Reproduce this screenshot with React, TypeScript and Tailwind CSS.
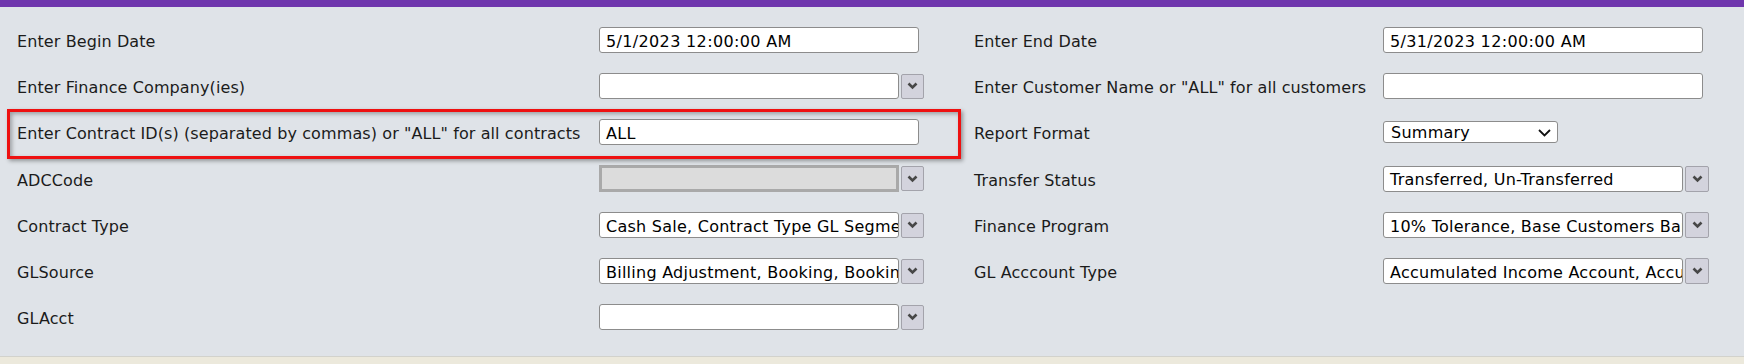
import React from 'react'

const font = { fontFamily: '"DejaVu Sans", Verdana, sans-serif' }

function TextBox({ value = '' }: { value?: string }) {
  return (
    <div className="h-[26px] w-[320px] border border-[#8c8c8c] rounded-[3px] bg-white px-[6px] pt-[3px] flex items-center text-[16px] tracking-[0.35px] text-black whitespace-nowrap overflow-hidden">
      {value}
    </div>
  )
}

function Chevron() {
  return (
    <svg width="11" height="8" viewBox="0 0 11 8">
      <polyline points="1.5,1.5 5.5,5.5 9.5,1.5" fill="none" stroke="#474747" strokeWidth="2.6" />
    </svg>
  )
}

function MultiSelect({ value = '', disabled = false, right = false }: { value?: string; disabled?: boolean; right?: boolean }) {
  return (
    <div className="flex items-center gap-[2px]">
      {disabled ? (
        <div className="h-[27px] w-[300px] border-[3px] border-[#a9a9a9] bg-[#dcdcdc]" />
      ) : (
        <div className="h-[26px] w-[300px] border border-[#8c8c8c] rounded-[3px] bg-white pl-[6px] pt-[3px] flex items-center text-[16px] tracking-[0.25px] text-black whitespace-nowrap overflow-hidden">
          {value}
        </div>
      )}
      <div
        className={
          (right ? 'w-[24px] h-[26px]' : 'w-[23px] h-[25px]') +
          ' border border-[#a3a3ab] rounded-[2px] bg-[#d3d3dd] flex items-center justify-center'
        }
      >
        <Chevron />
      </div>
    </div>
  )
}

function Label({ children }: { children: React.ReactNode }) {
  return (
    <div className="text-[16px] tracking-[0.1px] text-[#1b1b1b] whitespace-nowrap flex items-center h-[26px] pt-[4px]">
      {children}
    </div>
  )
}

export default function App() {
  return (
    <div className="relative w-[1744px] h-[364px] bg-[#ece9dc] overflow-hidden" style={font}>
      <div className="h-[7px] bg-[#6f36ad]" />
      <div className="bg-[#dfe3e8] border-b border-[#d2d2cc] pl-[17px] pt-[20px] pb-[26px]">
        <div className="grid grid-cols-[582px_375px_409px_1fr] gap-y-[20px] items-center">
          <Label>Enter Begin Date</Label>
          <TextBox value="5/1/2023 12:00:00 AM" />
          <Label>Enter End Date</Label>
          <TextBox value="5/31/2023 12:00:00 AM" />

          <Label>Enter Finance Company(ies)</Label>
          <MultiSelect />
          <Label>Enter Customer Name or "ALL" for all customers</Label>
          <TextBox />

          <Label>Enter Contract ID(s) (separated by commas) or "ALL" for all contracts</Label>
          <TextBox value="ALL" />
          <Label>Report Format</Label>
          <div className="h-[22px] w-[175px] border border-[#8c8c8c] rounded-[3px] bg-white pl-[7px] pr-[6px] pt-[2px] flex items-center justify-between text-[16px] tracking-[0.25px] text-black">
            <span>Summary</span>
            <svg width="13" height="8" viewBox="0 0 13 8">
              <polyline points="1,1 6.5,6.5 12,1" fill="none" stroke="#111" strokeWidth="1.8" />
            </svg>
          </div>

          <Label>ADCCode</Label>
          <MultiSelect disabled />
          <Label>Transfer Status</Label>
          <MultiSelect value="Transferred, Un-Transferred" right />

          <Label>Contract Type</Label>
          <MultiSelect value="Cash Sale, Contract Type GL Segment" />
          <Label>Finance Program</Label>
          <MultiSelect value="10% Tolerance, Base Customers Bank" right />

          <Label>GLSource</Label>
          <MultiSelect value="Billing Adjustment, Booking, Booking Reversal" />
          <Label>GL Acccount Type</Label>
          <MultiSelect value="Accumulated Income Account, Accumulated" right />

          <Label>GLAcct</Label>
          <MultiSelect />
          <div />
          <div />
        </div>
      </div>
      <div className="absolute left-[7px] top-[109px] w-[954px] h-[50px] border-[3px] border-[#ee1111] shadow-[2px_2px_4px_rgba(0,0,0,0.35),inset_2px_2px_4px_rgba(0,0,0,0.3)]" />
    </div>
  )
}
